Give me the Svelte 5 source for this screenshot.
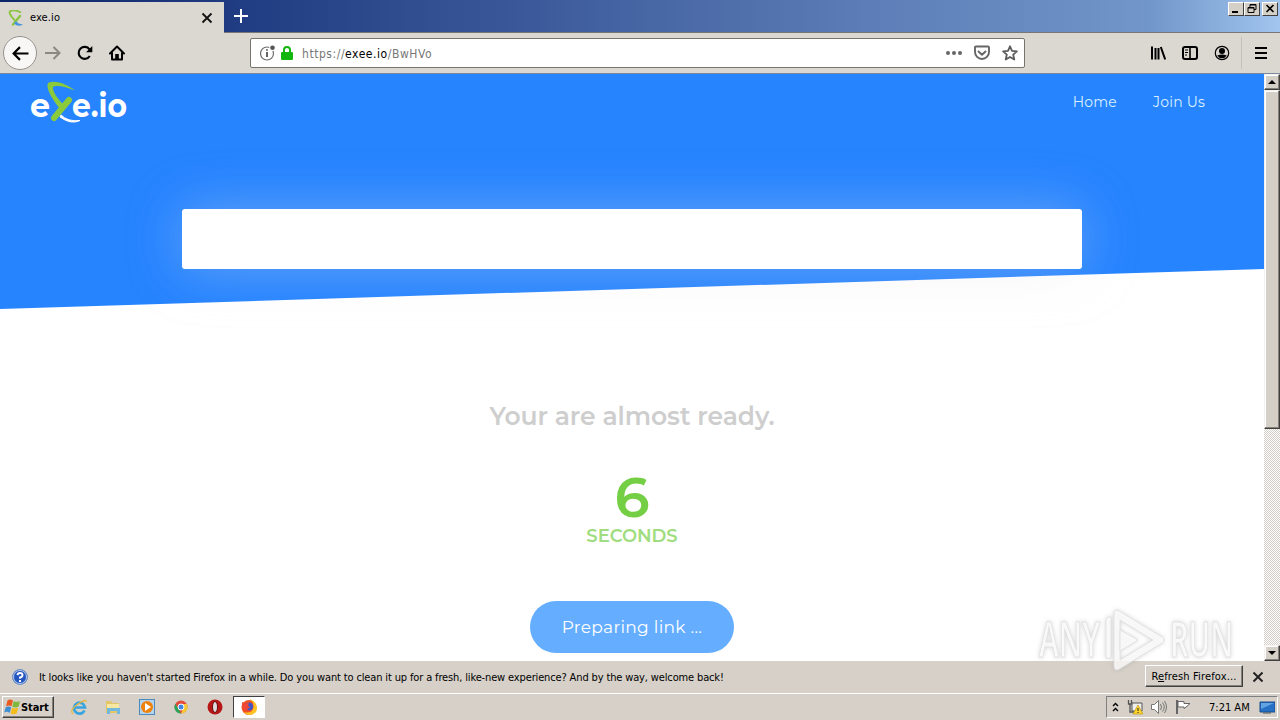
<script lang="ts">
	/**
	 * Desktop with a browser window open on the exe.io countdown page
	 */

	let seconds = $state(6);
	const url = { scheme: 'https://', host: 'exee.io', path: '/BwHVo' };
	const links = ['Home', 'Join Us'];
</script>

<div class="desktop">
	<header class="titlebar">
		<div class="tab">
			<svg class="tab__icon" viewBox="0 0 16 16">
				<path d="M13 2.500C6-1 0 0 2 4q2 4 5 6.500" fill="none" stroke="#8bc53f" stroke-width="1.900" />
				<path d="M12 6L5 14.500" stroke="#8bc53f" stroke-width="2.400" stroke-linecap="round" />
				<path d="M8 11q2 3 7 3.500q-5 3-9-1z" fill="#4794dd" />
			</svg>
			<span class="tab__title">exe.io</span>
			<svg class="tab__close" viewBox="0 0 12 12"><path d="M1.500 1.500l9 9m0-9l-9 9" stroke="#111" stroke-width="1.800" /></svg>
		</div>
		<svg class="newtab" viewBox="0 0 14 14"><path d="M7 0v14M0 7h14" stroke="#fff" stroke-width="2" /></svg>
		<div class="controls">
			<span class="control"><svg viewBox="0 0 14 12"><path d="M3 9h6" stroke="#000" stroke-width="2" /></svg></span>
			<span class="control"><svg viewBox="0 0 14 12"><path d="M5 4V1.500h6v5H9M5 2h6M3 4.500h6v5H3zM3 5h6" fill="none" stroke="#000" /></svg></span>
			<span class="control control--close"><svg viewBox="0 0 14 12"><path d="M3.500 2l7 7m0-7l-7 7" stroke="#000" stroke-width="1.600" /></svg></span>
		</div>
	</header>

	<nav class="toolbar">
		<span class="back">
			<svg viewBox="0 0 16 16"><path d="M15.500 8H1.500M7.500 2L1.500 8l6 6" fill="none" stroke="#000" stroke-width="2" /></svg>
		</span>
		<svg class="tool tool--forward" viewBox="0 0 16 16"><path d="M0 8h14.500M8.500 2l6 6-6 6" fill="none" stroke="#8a8883" stroke-width="2" /></svg>
		<svg class="tool tool--reload" viewBox="0 0 16 16">
			<path d="M12.500 4.300A6 6 0 1 0 12.800 11" fill="none" stroke="#000" stroke-width="2.100" />
			<path d="M15.300 1v6.300H9z" />
		</svg>
		<svg class="tool tool--home" viewBox="0 0 16 16">
			<path d="M1 8.500L8 1.500l7 7M3 8v6.500h10V8" fill="none" stroke="#000" stroke-width="2" stroke-linejoin="round" stroke-linecap="round" />
			<path d="M6.200 9h3.600v6H6.200z" />
		</svg>

		<div class="urlbar">
			<svg class="urlbar__info" viewBox="0 0 16 16">
				<circle cx="7" cy="8.500" r="6.500" fill="none" stroke="#6d6d6d" stroke-width="1.200" />
				<path d="M7 7v5M7 4.300v1.500" stroke="#555" stroke-width="1.800" />
				<circle cx="12.500" cy="2.700" r="3.300" fill="#fff" /><circle cx="12.500" cy="2.700" r="2.300" fill="#555" />
			</svg>
			<svg class="urlbar__lock" viewBox="0 0 12 14">
				<path d="M3 7V4a3 3 0 0 1 6 0v3" fill="none" stroke="#12b60c" stroke-width="2" />
				<rect y="6" width="12" height="8" rx="1.300" fill="#12b60c" />
			</svg>
			<span class="urlbar__text">{url.scheme}<b>{url.host}</b>{url.path}</span>
			<svg class="urlbar__dots" viewBox="0 0 16 16" fill="#666"><circle cx="2" cy="8" r="2" /><circle cx="8" cy="8" r="2" /><circle cx="14" cy="8" r="2" /></svg>
			<svg class="urlbar__pocket" viewBox="0 0 16 16" fill="none" stroke="#666" stroke-width="1.900">
				<path d="M2 1.500h12q1 0 1 1V7a7 7 0 0 1-14 0V2.500q0-1 1-1z" />
				<path d="M4.500 6.500L8 9.800l3.500-3.300" stroke-linecap="round" stroke-linejoin="round" />
			</svg>
			<svg class="urlbar__star" viewBox="0 0 16 16"><path d="M8 1.300l2 4.500 4.900.5-3.700 3.300 1.100 4.900L8 12l-4.300 2.500 1.100-4.900L1.100 6.300 6 5.800z" fill="none" stroke="#5c5c5c" stroke-width="1.800" stroke-linejoin="round" /></svg>
		</div>

		<div class="tools">
			<svg class="tool" viewBox="0 0 16 16"><path d="M2 1.500v13M5.500 3v11.500M8.500 3v11.500M10.800 2l4.400 12.500" stroke="#000" stroke-width="2" /></svg>
			<svg class="tool" viewBox="0 0 16 16">
				<rect x="1" y="2" width="14" height="12" rx="2" fill="none" stroke="#000" stroke-width="2" />
				<path d="M8 2v12" stroke="#000" stroke-width="1.600" /><path d="M3 5h3M3 7.500h3M3 10h2" stroke="#000" />
			</svg>
			<svg class="tool" viewBox="0 0 16 16">
				<circle cx="8" cy="8" r="6.700" fill="none" stroke="#000" stroke-width="1.200" />
				<circle cx="8" cy="6" r="3" /><path d="M3.200 10.500q4.800-2 9.600 0Q11 13.300 8 13.300T3.200 10.500z" />
			</svg>
			<span class="tools__divider"></span>
			<svg class="tool tool--menu" viewBox="0 0 16 16"><path d="M2 3h12M2 8h12M2 13h12" stroke="#000" stroke-width="2" /></svg>
		</div>
	</nav>

	<div class="viewport">
		<main class="page">
			<svg class="page__slope" viewBox="0 0 1264 236" preserveAspectRatio="none"><path d="M0 0H1264V196L0 236Z" fill="#2684ff" /></svg>
			<div class="page__header">
				<svg class="logo" viewBox="0 0 100 44">
					<text class="logo__text" x="0" y="36" textLength="20" lengthAdjust="spacingAndGlyphs">e</text>
					<text class="logo__text" x="42" y="36" textLength="55" lengthAdjust="spacingAndGlyphs">e.io</text>
					<path d="M31 34Q38 41 50 39.500Q41 44 30 36Z" fill="#fff" stroke="#fff" />
					<path d="M32 30C22 19 14 4 19 1.500C27-1 38 4 45 9.500C36 5.500 26 3.500 23 6C22 10 29 20 35 25Z" fill="#8bcb3b" />
					<path d="M39 19L24 37" stroke="#8bcb3b" stroke-width="6" stroke-linecap="round" />
				</svg>
				<nav class="menu">
					{#each links as link}
						<span class="menu__link">{link}</span>
					{/each}
				</nav>
			</div>
			<div class="banner"></div>
			<h1 class="ready">Your are almost ready.</h1>
			<div class="count">{seconds}</div>
			<div class="unit">SECONDS</div>
			<button class="prepare">Preparing link ...</button>
		</main>
		<div class="scrollbar">
			<span class="scrollbar__button"><svg viewBox="0 0 8 4"><path d="M0 4l4-4 4 4z" /></svg></span>
			<span class="scrollbar__thumb"></span>
			<span class="scrollbar__button scrollbar__button--down"><svg viewBox="0 0 8 4"><path d="M0 0l4 4 4-4z" /></svg></span>
		</div>
	</div>

	<div class="notice">
		<svg class="notice__icon" viewBox="0 0 16 16">
			<circle cx="8" cy="8" r="7.500" fill="#2456bd" stroke="#7295c8" /><circle cx="8" cy="8" r="6.500" fill="none" stroke="#dce7fa" stroke-width=".8" />
			<path d="M5.500 6.200Q5.700 4 8 4q2.500 0 2.500 2T8 8.500v1.300M8 11v2" fill="none" stroke="#fff" stroke-width="1.900" />
		</svg>
		<span class="notice__text">It looks like you haven't started Firefox in a while. Do you want to clean it up for a fresh, like-new experience? And by the way, welcome back!</span>
		<button class="notice__button">R<u>e</u>fresh Firefox...</button>
		<svg class="notice__close" viewBox="0 0 12 12"><path d="M1.500 1.500l9 9m0-9l-9 9" stroke="#222" stroke-width="2" /></svg>
	</div>

	<footer class="taskbar">
		<button class="start">
			<svg viewBox="0 0 16 16">
				<path d="M3.500 1.500q2.500-2 5.500 0L7.500 7.300q-2.500-1.500-5.500 0z" fill="#e95b20" /><path d="M9.800 2q3 1.700 6.200 0L14.500 7.800q-3 1.500-6.200 0z" fill="#7fb83b" />
				<path d="M1.700 8.300q2.800-1.500 5.500 0L5.700 14q-2.500-2-5.500-.5z" fill="#3f8ed4" /><path d="M8 8.700q3 1.500 6.200 0L12.700 14.500q-3 1.500-6.200 0z" fill="#f6bc1c" />
			</svg>
			Start
		</button>
		<div class="launcher">
			<svg viewBox="0 0 16 16">
				<path d="M13.500 11.500A5.500 5.500 0 1 1 14 8.500H4" fill="none" stroke="#38a4df" stroke-width="2.700" />
				<path d="M2 15Q-2 11 7 5t8-2" fill="none" stroke="#e7b83e" stroke-width="1.300" />
			</svg>
			<svg viewBox="0 0 16 16"><path d="M1 2h5l1 2h7v10H1z" fill="#e4c568" /><path d="M2 5h12v6H2z" fill="#f8e7a0" /><path d="M2 15V9h13v6h-3v-3H5v3z" fill="#72b9df" /></svg>
			<svg viewBox="0 0 16 16"><rect x=".5" y=".5" width="15" height="15" fill="#b5d4eb" stroke="#4a8abd" /><circle cx="8" cy="8" r="6" fill="#ef820d" /><path d="M6 4l6 4-6 4z" fill="#fff" /></svg>
			<svg viewBox="0 0 16 16">
				<circle cx="8" cy="8" r="6.500" fill="#e44b3c" /><path d="M2.400 4.700L8 14.500A6.500 6.500 0 0 1 2.400 4.700z" fill="#26a65b" />
				<path d="M8 5h5.800A6.500 6.500 0 0 1 8 14.500L10.600 9z" fill="#f7ca35" /><circle cx="8" cy="8" r="3" fill="#4285e8" stroke="#fff" />
			</svg>
			<svg viewBox="0 0 16 16"><circle cx="8" cy="8" r="7.500" fill="#b71616" /><ellipse cx="8" cy="8" rx="2.500" ry="5.500" fill="#ddd" stroke="#6b0909" /></svg>
			<span class="launcher__active">
				<svg viewBox="0 0 16 16">
					<circle cx="8" cy="8.500" r="7.500" fill="#f5521f" />
					<path d="M9 0q7 3 7 9t-7 7q-4 0-6-3q7 2 9-3t-3-10z" fill="#ffc326" />
					<circle cx="8" cy="7.500" r="4" fill="#3f55c8" />
					<path d="M1 3l3 1.500 4-.5-1 2.500 2 2-3 1.500 3 2.500-5-.5-3-4z" fill="#f04636" />
				</svg>
			</span>
		</div>
		<div class="tray">
			<svg class="tray__chevron" viewBox="0 0 7 10"><path d="M1 4l2.500-2.500L6 4M1 9l2.500-2.500L6 9" fill="none" stroke="#000" stroke-width="1.400" /></svg>
			<svg class="tray__icon" viewBox="0 0 16 16">
				<path d="M5 4h10v8H5z" fill="#eee" stroke="#555" /><path d="M1.500 1v4h3V1M3 5v8h5" fill="none" stroke="#555" stroke-width="1.300" />
				<path d="M11 6l5 9H6z" fill="#ffd62e" stroke="#b79200" stroke-width=".6" /><path d="M11 9v3M11 13v1" stroke="#222" />
			</svg>
			<svg class="tray__icon" viewBox="0 0 16 16" fill="none" stroke="#777"><path d="M.5 5.500h3l4-4v13l-4-4h-3z" fill="#fff" /><path d="M9.500 5q2 3 0 6M11.500 3.500q3.500 4.500 0 9M13.500 2q4 6 0 12" /></svg>
			<svg class="tray__icon" viewBox="0 0 16 16" stroke="#666"><path d="M2 1v14" stroke-width="2" /><path d="M3 2.500h6v2h6q-3 3-6 5V8H3z" fill="#fff" /></svg>
			<span class="tray__time">7:21 AM</span>
			<svg class="tray__icon" viewBox="0 0 16 16"><path d="M1 3h15v10H1z" fill="#2670c5" stroke="#174a8a" /><path d="M2 4h13L2 10z" fill="#62a3e1" /><path d="M4 14h8" stroke="#555" /></svg>
		</div>
	</footer>

	<!-- recorder mark, floats over the page and the notice bar -->
	<svg class="watermark" viewBox="0 0 210 76">
		<g fill="#fff" fill-opacity=".8" stroke="#e2e2e2" stroke-width="1">
			<text x="4" y="49" textLength="61" lengthAdjust="spacingAndGlyphs">ANY</text>
			<text x="135" y="49" textLength="63" lengthAdjust="spacingAndGlyphs">RUN</text>
			<path fill-rule="evenodd" d="M84 3Q79 0 79 7V57Q79 65 86 60L127 35Q131 32 127 29ZM85 12L118 32L85 52Z" />
			<path fill-rule="evenodd" d="M76 9Q71 8 71 14V50H76ZM85 22L103 32L85 43Z" />
		</g>
	</svg>
</div>

<style>
	:global(body) {
		margin: 0;
		overflow: hidden;
	}

	.desktop {
		position: relative;
		display: flex;
		flex-direction: column;
		width: 1280px;
		height: 720px;
		overflow: hidden;
		background: #d6d0c8;
		font-family: "DejaVu Sans Condensed", "DejaVu Sans", sans-serif;
		font-size: 11px;
		color: #000;
	}

	svg {
		display: block;
		flex: none;
	}

	button {
		font: inherit;
		color: inherit;
		box-sizing: border-box;
	}

	.titlebar {
		display: flex;
		height: 33px;
		box-sizing: border-box;
		border-bottom: 1px solid #77777a;
		background: linear-gradient(90deg, #0c246a 0, #203c82 240px, #5f80b9 900px, #7196c9 1150px, #a1c5ee 1280px);
	}

	.tab {
		display: flex;
		align-items: center;
		width: 224px;
		height: 31px;
		margin-top: 2px;
		padding: 0 11px 0 8px;
		box-sizing: border-box;
		background: #dbd8d2;
	}

	.tab__icon {
		width: 16px;
		height: 16px;
	}

	.tab__title {
		flex: 1;
		margin-left: 6px;
		letter-spacing: 0.1px;
	}

	.tab__close {
		width: 12px;
		height: 12px;
	}

	.newtab {
		width: 14px;
		height: 14px;
		margin: 9px 0 0 10px;
	}

	.controls {
		display: flex;
		height: 14px;
		margin: 2px 2px 0 auto;
	}

	.control {
		width: 16px;
		height: 14px;
		box-sizing: border-box;
		border: 1px solid;
		border-color: #fff #404040 #404040 #fff;
		background: #d4d0c8;
	}

	.control svg {
		width: 14px;
		height: 12px;
	}

	.control--close {
		margin-left: 2px;
	}

	.toolbar {
		display: flex;
		align-items: center;
		height: 41px;
		box-sizing: border-box;
		padding-left: 3px;
		border-bottom: 1px solid #7a8a9e;
		background: #dbd8d2;
	}

	.tool {
		width: 16px;
		height: 16px;
	}

	.back {
		display: grid;
		place-items: center;
		width: 34px;
		height: 34px;
		box-sizing: border-box;
		border: 1px solid #96938d;
		border-radius: 50%;
		background: #f8f7f5;
	}

	.back svg {
		width: 17px;
		height: 17px;
	}

	.tool--forward {
		margin-left: 8px;
	}

	.tool--reload,
	.tool--home {
		margin-left: 16px;
	}

	.urlbar {
		display: flex;
		align-items: center;
		width: 775px;
		height: 30px;
		box-sizing: border-box;
		margin-left: 125px;
		padding: 0 6px 0 9px;
		border: 1px solid #77736d;
		border-radius: 2px;
		background: #fff;
	}

	.urlbar svg {
		width: 16px;
		height: 16px;
	}

	.urlbar .urlbar__lock {
		width: 12px;
		height: 14px;
		margin-left: 5px;
	}

	.urlbar__text {
		flex: 1;
		margin-left: 9px;
		padding-top: 1px;
		font-size: 12px;
		letter-spacing: 0.55px;
		color: #777;
	}

	.urlbar__text b {
		font-weight: 400;
		color: #000;
	}

	.urlbar .urlbar__pocket,
	.urlbar .urlbar__star {
		margin-left: 12px;
	}

	.tools {
		display: flex;
		align-items: center;
		gap: 16px;
		margin: 0 11px 0 auto;
	}

	.tools__divider {
		width: 1px;
		height: 32px;
		margin: 0 -5px 0 -5px;
		background: #c5c1b9;
	}

	.viewport {
		display: flex;
		height: 587px;
	}

	.page {
		position: relative;
		display: flex;
		flex-direction: column;
		align-items: center;
		width: 1264px;
		height: 587px;
		overflow: hidden;
		background: #fff;
		font-family: Montserrat, "Open Sans", Lato, sans-serif;
	}

	/* angled backdrop behind the page content */
	.page__slope {
		position: absolute;
		top: -1px;
		left: 0;
		width: 1264px;
		height: 236px;
	}

	.page__header {
		position: relative;
		display: flex;
		justify-content: space-between;
		width: 100%;
		height: 135px;
		padding: 7px 59px 0 30px;
		box-sizing: border-box;
	}

	.logo {
		width: 100px;
		height: 44px;
		overflow: visible;
	}

	.logo__text {
		font: 700 33px Montserrat, Lato, sans-serif;
		fill: #fff;
	}

	.menu {
		display: flex;
		gap: 36px;
		padding-top: 10px;
		font-size: 14px;
		line-height: 22px;
		letter-spacing: 0.2px;
		color: #d9f0ff;
	}

	.banner {
		position: relative;
		width: 900px;
		height: 60px;
		border-radius: 3px;
		background: #fff;
		box-shadow: 0 0 54px rgba(230, 225, 225, 0.34);
	}

	.ready {
		margin: 128px 0 0;
		font-size: 25px;
		line-height: 38px;
		font-weight: 600;
		letter-spacing: -0.05px;
		color: #cecece;
	}

	.count {
		margin-top: 34px;
		font-size: 56px;
		line-height: 56px;
		font-weight: 600;
		color: #75cf45;
	}

	.unit {
		margin-top: -1px;
		font-size: 18px;
		line-height: 24px;
		font-weight: 600;
		letter-spacing: -0.05px;
		color: #a0dd80;
	}

	.prepare {
		width: 204px;
		height: 52px;
		flex: none;
		margin-top: 53px;
		padding: 0;
		border: 0;
		border-radius: 26px;
		background: #64adff;
		color: #fff;
		font-size: 17px;
		letter-spacing: 0.3px;
	}

	.scrollbar {
		display: flex;
		flex-direction: column;
		width: 16px;
		background: repeating-conic-gradient(#fff 0 25%, #d4d0c8 0 50%) 0 0 / 2px 2px;
	}

	.scrollbar__button,
	.scrollbar__thumb {
		box-sizing: border-box;
		border: 1px solid;
		border-color: #f4f2ee #404040 #404040 #f4f2ee;
		box-shadow: inset -1px -1px #858179, inset 1px 1px #fff;
		background: #d4d0c8;
	}

	.scrollbar__button {
		display: grid;
		place-items: center;
		height: 16px;
	}

	.scrollbar__button svg {
		width: 8px;
		height: 4px;
	}

	.scrollbar__button--down {
		margin-top: auto;
	}

	.scrollbar__thumb {
		height: 339px;
	}

	.notice {
		display: flex;
		align-items: center;
		height: 32px;
		padding: 0 16px 0 12px;
	}

	.notice__icon {
		width: 16px;
		height: 16px;
	}

	.notice__text {
		margin-left: 11px;
		white-space: nowrap;
		letter-spacing: -0.14px;
	}

	.notice__button {
		width: 98px;
		height: 22px;
		margin: 0 9px 2px auto;
		padding: 0;
		border: 1px solid;
		border-color: #fff #404040 #404040 #fff;
		box-shadow: inset -1px -1px #858179;
		background: #d6d0c8;
		white-space: nowrap;
		letter-spacing: 0.15px;
	}

	.notice__close {
		width: 12px;
		height: 12px;
	}

	.taskbar {
		display: flex;
		align-items: center;
		height: 27px;
		box-sizing: border-box;
		border-top: 1px solid #fff;
		padding: 0 2px;
	}

	.start {
		display: flex;
		align-items: center;
		gap: 1px;
		width: 52px;
		height: 22px;
		padding: 0 1px;
		border: 1px solid;
		border-color: #fff #404040 #404040 #fff;
		box-shadow: inset -1px -1px #858179;
		background: #d6d0c8;
		font-weight: 700;
		letter-spacing: -0.1px;
	}

	.start svg {
		width: 16px;
		height: 16px;
	}

	.launcher {
		display: flex;
		align-items: center;
		gap: 18px;
		margin-left: 17px;
	}

	.launcher svg {
		width: 16px;
		height: 16px;
	}

	.launcher__active {
		display: grid;
		place-items: center;
		width: 32px;
		height: 22px;
		box-sizing: border-box;
		margin-left: -8px;
		border: 1px solid;
		border-color: #404040 #fff #fff #404040;
		background: #fff;
	}

	.tray {
		display: flex;
		align-items: center;
		width: 172px;
		height: 22px;
		box-sizing: border-box;
		margin-left: auto;
		padding: 0 1px 0 5px;
		border: 1px solid;
		border-color: #808080 #fff #fff #808080;
	}

	.tray__chevron {
		width: 7px;
		height: 10px;
	}

	.tray__icon {
		width: 16px;
		height: 16px;
		margin-left: 8px;
	}

	.tray__time {
		margin: 0 1px 0 18px;
		white-space: nowrap;
	}

	.watermark {
		position: absolute;
		left: 1035px;
		top: 608px;
		width: 210px;
		height: 76px;
		overflow: visible;
		font: 600 49px "Open Sans", sans-serif;
		filter: drop-shadow(0 0 2px rgba(120, 120, 120, 0.35));
	}
</style>
